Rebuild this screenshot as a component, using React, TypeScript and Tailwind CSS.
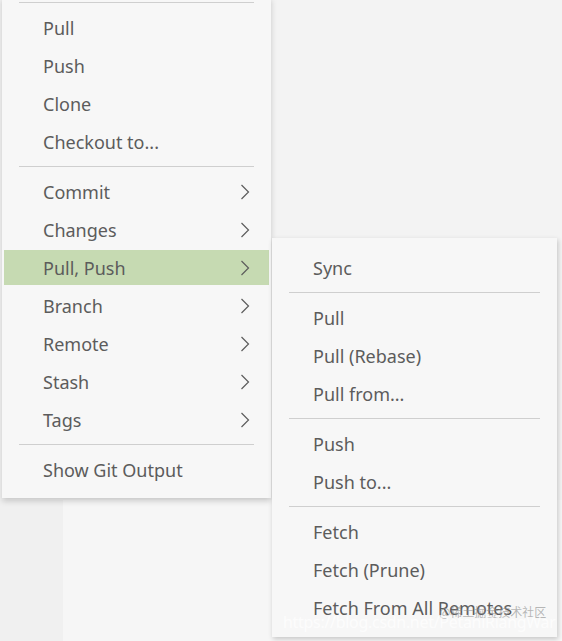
import React from "react";

type Item = { label: string; sub?: boolean; active?: boolean } | "sep";

const mainItems: Item[] = [
  "sep",
  { label: "Pull" },
  { label: "Push" },
  { label: "Clone" },
  { label: "Checkout to..." },
  "sep",
  { label: "Commit", sub: true },
  { label: "Changes", sub: true },
  { label: "Pull, Push", sub: true, active: true },
  { label: "Branch", sub: true },
  { label: "Remote", sub: true },
  { label: "Stash", sub: true },
  { label: "Tags", sub: true },
  "sep",
  { label: "Show Git Output" },
];

const subItems: Item[] = [
  { label: "Sync" },
  "sep",
  { label: "Pull" },
  { label: "Pull (Rebase)" },
  { label: "Pull from..." },
  "sep",
  { label: "Push" },
  { label: "Push to..." },
  "sep",
  { label: "Fetch" },
  { label: "Fetch (Prune)" },
  { label: "Fetch From All Remotes" },
];

function Chevron() {
  return (
    <svg width="10" height="16" viewBox="0 0 10 16" fill="none" className="text-[#5c5c5c]">
      <path d="M1.5 1 L8.5 8 L1.5 15" stroke="currentColor" strokeWidth="1.2" />
    </svg>
  );
}

function MenuList({ items }: { items: Item[] }) {
  return (
    <>
      {items.map((it, i) =>
        it === "sep" ? (
          <div key={i} className="mx-[17px] mt-[5px] mb-[6px] h-px bg-[#cfcfcf]" />
        ) : (
          <div
            key={i}
            className={`mx-[2px] flex h-[38px] items-center justify-between border-t border-b-2 border-transparent bg-clip-padding pt-px pl-[39px] pr-[19px] ${
              it.active ? "bg-[#c6dab2]" : ""
            }`}
          >
            <span>{it.label}</span>
            {it.sub && <Chevron />}
          </div>
        )
      )}
    </>
  );
}

export default function App() {
  return (
    <div
      className="relative flex h-[641px] w-[562px] overflow-hidden bg-[#f3f3f3] text-[18px] text-[#5c5c5c]"
      style={{ fontFamily: '"Segoe UI", "Noto Sans", "Open Sans", sans-serif' }}
    >
      <div className="mt-[500px] w-[63px] bg-[#f0f0f0]" />
      <div className="mt-[500px] flex-1 bg-[#f6f6f6]" />

      <div className="absolute left-[2px] top-[-3px] w-[269px] bg-[#f7f7f7] pb-[9px] shadow-[0_3px_6px_rgba(0,0,0,0.18)]">
        <MenuList items={mainItems} />
      </div>

      <div className="absolute left-[272px] top-[238px] w-[285px] bg-[#f7f7f7] pt-[11px] pb-[10px] shadow-[1px_2px_5px_rgba(0,0,0,0.2)]">
        <MenuList items={subItems} />
      </div>

      <div
        className="pointer-events-none absolute left-[439px] top-[603px] whitespace-nowrap text-[12px] text-[#8a8a8a]/60"
        style={{ fontFamily: '"Noto Sans CJK SC", sans-serif' }}
      >
        @稀土掘金技术社区
      </div>
      <div className="pointer-events-none absolute left-[283px] top-[610px] whitespace-nowrap text-[16px] tracking-[-0.3px] text-white/70">
        https://blog.csdn.net/PetaniRiangWar
      </div>
    </div>
  );
}
